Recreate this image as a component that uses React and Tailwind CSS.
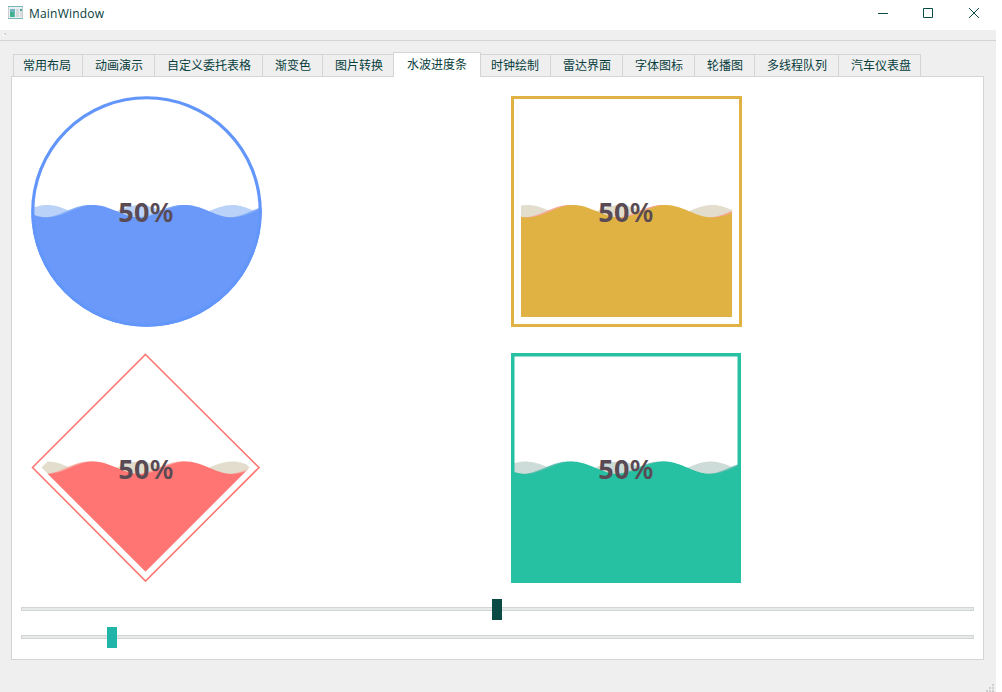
import React from "react";

const tabs = [
  { label: "常用布局", cls: "w-[69px] pl-[9px]" },
  { label: "动画演示", cls: "w-[72px] pl-[12px]" },
  { label: "自定义委托表格", cls: "w-[108px] pl-[12px]" },
  { label: "渐变色", cls: "w-[60px] pl-[12px]" },
  { label: "图片转换", cls: "w-[71px] pl-[12px]" },
  { label: "水波进度条", cls: "w-[88px] pl-[13px]", active: true },
  { label: "时钟绘制", cls: "w-[69px] pl-[10px] border-l-0" },
  { label: "雷达界面", cls: "w-[72px] pl-[12px]" },
  { label: "字体图标", cls: "w-[72px] pl-[12px]" },
  { label: "轮播图", cls: "w-[60px] pl-[12px]" },
  { label: "多线程队列", cls: "w-[84px] pl-[12px]" },
  { label: "汽车仪表盘", cls: "w-[83px] pl-[12px] border-r" },
];

function Tab({ label, cls, active }) {
  const state = active
    ? "h-[25px] bg-white border-x pb-[1px] -mb-px relative"
    : "h-[22px] bg-[#efefef] border-l";
  return (
    <div className={`flex shrink-0 items-center whitespace-nowrap border-t border-[#d4d4d4] ${state} ${cls}`}>
      {label}
    </div>
  );
}

// Closed path of a sine surface; the crest sits at x = crest.
function wave(crest, mid, bottom = 240) {
  const points = [];
  for (let x = 0; x <= 232; x += 2) {
    const y = mid - 6.2 * Math.cos(((x - crest) / 92.4) * 2 * Math.PI);
    points.push(`${x},${y.toFixed(2)}`);
  }
  return `M0,${bottom} L${points.join(" L")} L232,${bottom} Z`;
}

function Gauge({ id, clip, frame, back, middle, front, mid, crest = 62.5, textY }) {
  return (
    <svg width="232" height="232" viewBox="0 0 232 232" className="block">
      <defs>
        <clipPath id={id}>{clip}</clipPath>
      </defs>
      <g clipPath={`url(#${id})`}>
        <path d={wave(crest - 46.2, mid)} fill={back} />
        <path d={wave(crest - 4, mid)} fill={middle} />
        <path d={wave(crest, mid)} fill={front} />
      </g>
      {frame}
      <text
        x="115"
        y={textY}
        textAnchor="middle"
        fill="#5a4a53"
        className="font-['Noto_Sans',sans-serif] text-[27px] font-bold tracking-[0.4px]"
      >
        50<tspan className="font-semibold">%</tspan>
      </text>
    </svg>
  );
}

function Slider({ handle }) {
  return (
    <div className="relative h-[21px] pt-2">
      <div className="h-1 w-full border border-[#d3d5d5] bg-[#e6eaea]" />
      <div className={`absolute top-0 h-[21px] w-2.5 ${handle}`} />
    </div>
  );
}

function TitleBar() {
  return (
    <div className="flex h-[30px] items-center bg-white text-[#0b4a45]">
      <svg width="16" height="16" viewBox="0 0 16 16" className="ml-[8px] -mt-[4px]" shapeRendering="crispEdges">
        <rect x="0" y="1" width="15" height="13" fill="#e9eeee" />
        <path d="M0 1h15v1H0zM0 13h15v1H0z" fill="#78b8b8" />
        <path d="M0 2h1v11H0zM14 2h1v11h-1z" fill="#c9cfcf" />
        <rect x="2" y="4" width="5" height="8" fill="#6fb5c0" />
        <rect x="2" y="7" width="4" height="5" fill="#3fb28e" />
        <rect x="8" y="4" width="3" height="8" fill="#d5dbdb" />
        <rect x="12" y="4" width="2" height="2" fill="#4ca7a0" />
        <rect x="12" y="6" width="2" height="6" fill="#dadfdf" />
      </svg>
      <span className="ml-[5px] -mt-[3px] font-['Open_Sans',sans-serif] text-[12px] font-medium tracking-[0.2px] text-[#063d3c]">MainWindow</span>
      <svg width="110" height="16" viewBox="0 0 110 16" className="ml-auto mr-[14px] -mt-[4px]" fill="none" stroke="currentColor">
        <path d="M6 8.5h10M51.5 3.5h9v9h-9zM97 3l10 10M107 3L97 13" />
      </svg>
    </div>
  );
}

export default function App() {
  return (
    <div className="h-[692px] w-[1002px] overflow-hidden bg-white">
      <div className="flex h-full w-[996px] flex-col bg-[#efefef] font-['Liberation_Sans','Noto_Sans_CJK_SC',sans-serif] text-[12px] text-[#063d3c]">
        <TitleBar />
        <div className="h-[11px] border-b border-[#d4d4d4] pl-[4px] pt-[3px]">
          <div className="h-[2px] w-[2px] bg-[#d4d4d4] shadow-[-1px_1px_0_white]" />
        </div>
        <div className="flex h-[35px] items-end pl-[13px]">
          {tabs.map((t) => (
            <Tab key={t.label} {...t} />
          ))}
        </div>
        <div className="ml-[11px] h-[584px] w-[973px] border border-[#d4d4d4] bg-white px-[9px] pt-[19px]">
          <div className="grid h-[503px] grid-cols-[480px_480px] grid-rows-[257px_232px] pl-[10px]">
            <Gauge
              id="round"
              clip={<circle cx="115.5" cy="115.5" r="115" />}
              frame={<circle cx="115.5" cy="115.5" r="113.75" fill="none" stroke="#6396fa" strokeWidth="3.2" />}
              back="#bad2f8"
              middle="#86aff9"
              front="#6a99fa"
              mid={115.2}
              textY={126}
            />
            <Gauge
              id="framed"
              clip={<rect x="10" y="10" width="211" height="211" />}
              frame={<rect x="1.5" y="1.5" width="228" height="228" fill="none" stroke="#e0b244" strokeWidth="3" />}
              back="#e2ddcd"
              middle="#f7a89b"
              front="#e0b244"
              mid={115.2}
              textY={126}
            />
            <Gauge
              id="diamond"
              clip={<path d="M114.5 10.5L218.5 114.5L114.5 218.5L10.5 114.5Z" />}
              frame={<path d="M114.5 1.5L228 114.5L114.5 228L1.5 114.5Z" fill="none" stroke="#fb7874" strokeWidth="1.6" />}
              back="#e2ddcd"
              middle="#f7aaa0"
              front="#ff7573"
              mid={114.7}
              textY={126}
            />
            <Gauge
              id="solid"
              clip={<rect x="0" y="0" width="230" height="230" />}
              frame={<rect x="1.75" y="1.75" width="226.5" height="226.5" fill="none" stroke="#26c0a2" strokeWidth="3.5" />}
              back="#cddcd8"
              middle="#5fbfb0"
              front="#26c0a2"
              mid={114.7}
              crest={61}
              textY={126}
            />
          </div>
          <div className="flex w-[953px] flex-col gap-[7px]">
            <Slider handle="left-[471px] bg-[#0b4a45]" />
            <Slider handle="left-[86px] bg-[#20b5a8]" />
          </div>
        </div>
        <div className="mt-auto flex h-2 justify-end pr-[2px]">
          <svg width="8" height="8" viewBox="0 0 8 8" fill="#d0d0d0">
            <path d="M6 0h2v2H6zM3 3h2v2H3zM6 3h2v2H6zM0 6h2v2H0zM3 6h2v2H3zM6 6h2v2H6z" />
          </svg>
        </div>
      </div>
    </div>
  );
}
